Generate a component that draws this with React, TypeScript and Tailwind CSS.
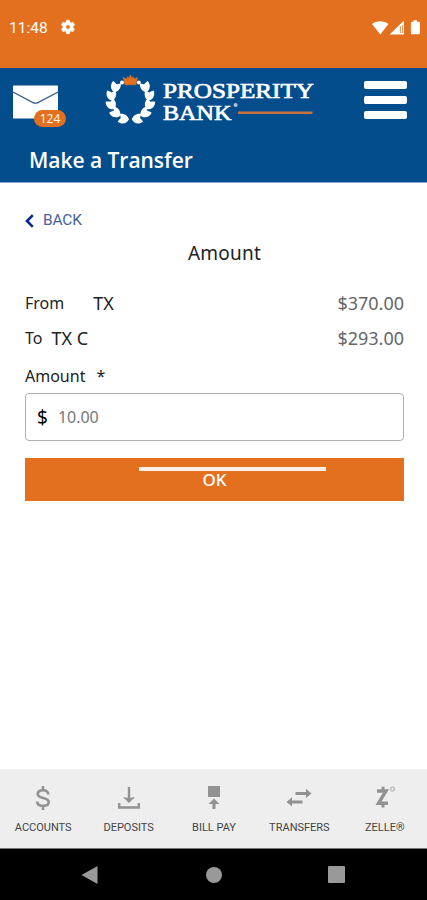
import type { ReactNode } from "react";

const LEAVES = [
  { x: 15.4, y: 17, r: 24 },
  { x: 11.4, y: 25.4, r: 4 },
  { x: 11.4, y: 34.6, r: -18 },
  { x: 15.6, y: 43, r: -42 },
  { x: 23.6, y: 49, r: -70 },
];

function Wreath() {
  return (
    <g fill="#fff">
      {LEAVES.map((l) => (
        <path
          key={l.y}
          transform={`translate(${l.x} ${l.y}) rotate(${l.r})`}
          d="M-4.600 -4.600 C-3 -4.400 -1.400 -3.800 0 -3 L3.600 -5.400 C5.400 -1.500 5.200 2 1.600 5.200 C-3.400 4.600 -6 0.500 -4.600 -4.600Z"
        />
      ))}
      <circle cx="22" cy="12.6" r="2" />
    </g>
  );
}

function Logo() {
  return (
    <svg width="214" height="60" viewBox="0 0 214 60" className="shrink-0">
      <Wreath />
      <g transform="translate(60.8 0)">
        <g transform="scale(-1 1)">
          <Wreath />
        </g>
      </g>
      <path
        d="M23.200 7.400 L26.800 9 L27.800 6.600 L29 8.600 L30.400 5 L31.800 8.600 L33 6.600 L34 9 L37.600 7.400 L35.800 14.800 H25Z"
        fill="#e3701e"
        stroke="#e3701e"
        strokeWidth="0.6"
      />
      <g
        fill="#fff"
        stroke="#fff"
        strokeWidth="0.7"
        fontFamily="'Liberation Serif', serif"
        fontSize="21.500"
      >
        <text x="63" y="28.2" textLength="151" lengthAdjust="spacingAndGlyphs">
          PROSPERITY
        </text>
        <text x="63" y="49.8" textLength="68.5" lengthAdjust="spacingAndGlyphs">
          BANK
        </text>
      </g>
      <circle cx="135.6" cy="35" r="2" fill="#a9c3e2" />
      <path d="M138 42.8H212.5" stroke="#c9733f" strokeWidth="2.600" />
    </svg>
  );
}

function StatusBar() {
  return (
    <div className="flex h-[68px] items-start bg-[#e3701e] pt-[18px] pl-[9px] font-['Roboto',sans-serif] text-white">
      <span className="text-[15.5px] leading-5">11:48</span>
      <svg width="16" height="16" viewBox="0 0 24 24" className="mt-[1px] ml-[12px] shrink-0">
        <path
          fill="#fff"
          stroke="#fff"
          strokeWidth="0.800"
          d="M19.4 13c.04-.32.1-.66.1-1s-.03-.68-.07-1l2.3-1.7a.5.5 0 0 0 .1-.64l-2-3.5a.5.5 0 0 0-.6-.22l-2.6 1a7.300 7.300 0 0 0-1.700-1L14.250 2.200A.5.5 0 0 0 13.750 1.800h-3.800a.5.5 0 0 0-.5.42L9.100 4.950a7.700 7.700 0 0 0-1.700 1l-2.600-1a.5.5 0 0 0-.6.22l-2 3.500a.5.5 0 0 0 .12.64L4.570 11a8 8 0 0 0 0 2l-2.200 1.700a.5.5 0 0 0-.12.64l2 3.460c.12.22.4.3.6.22l2.600-1c.52.400 1.100.730 1.700.980l.4 2.700c.04.240.240.420.5.420h3.800c.25 0 .46-.18.5-.42l.35-2.700a7 7 0 0 0 1.700-.98l2.600 1c.23.08.5 0 .6-.22l2-3.460a.5.5 0 0 0-.12-.64zM12 15.200a3.200 3.200 0 1 1 0-6.400 3.200 3.200 0 0 1 0 6.400z"
        />
      </svg>
      <svg width="49" height="16" viewBox="0 0 49 16" fill="#fff" className="mt-[2px] mr-[6px] ml-auto shrink-0">
        <path d="M0 4C4.300.200 12 .200 16.400 4L8.300 14.500Z" />
        <path d="M32 .500V14.500H17.600Z" />
        <path d="M28.600 6V13M30.600 5V13" stroke="#e3701e" strokeWidth="0.700" />
        <path d="M41.500.3h3.400v1.500h2.200c.5 0 .8.3.8.8V13.500c0 .5-.3.800-.8.800h-7.400c-.5 0-.8-.3-.8-.8V2.600c0-.5.3-.8.8-.8h1.800z" />
      </svg>
    </div>
  );
}

function Header() {
  return (
    <header className="h-[115px] border-b border-[#8ba4cf] bg-[#034d8d]">
      <div className="flex h-[69px] items-start">
        <div className="relative mt-[17px] ml-[13px] h-[34px] w-[45px] shrink-0">
          <svg width="45" height="34" viewBox="0 0 45 34">
            <path d="M0 1.500C0 .8.500.5 1 .5H44c.6 0 1 .4 1 1V32.500c0 .6-.4 1-1 1H1c-.6 0-1-.4-1-1Z" fill="#fff" />
            <path d="M0 7 L19.500 17.400Q22.500 19 25.500 17.400L45 7" fill="none" stroke="#3d5f92" strokeWidth="1.300" />
          </svg>
          <span className="absolute top-[25px] left-[21px] flex h-[17px] w-[32px] items-center justify-center rounded-full bg-[#e3701e] font-['Open_Sans',sans-serif] text-[12px] font-medium text-white">
            124
          </span>
        </div>
        <div className="ml-[42px] pt-[2px]">
          <Logo />
        </div>
        <div className="mt-[13px] mr-[20px] ml-auto flex flex-col gap-[7px]">
          <span className="h-[8px] w-[43px] rounded-[2px] bg-white" />
          <span className="h-[8px] w-[43px] rounded-[2px] bg-white" />
          <span className="h-[8px] w-[43px] rounded-[2px] bg-white" />
        </div>
      </div>
      <h1 className="pt-[9px] pl-[29px] font-['Open_Sans',sans-serif] text-[21px] leading-7 font-semibold tracking-[-0.03px] text-white">
        Make a Transfer
      </h1>
    </header>
  );
}

function TransferForm() {
  return (
    <main className="h-[586px] bg-white pt-[28px] pr-[23px] pl-[25px] font-['Noto_Sans',sans-serif] text-[#222]">
      <div className="flex h-5 items-center text-[#4a629c]">
        <svg width="9" height="14" viewBox="0 0 9 14">
          <path d="M7.800 1.200 2 7 7.800 12.800" fill="none" stroke="#0b2b86" strokeWidth="2.600" />
        </svg>
        <span className="ml-[9px] font-['Roboto',sans-serif] text-[15.500px] tracking-[-0.2px]">BACK</span>
      </div>
      <h2 className="mt-[8px] text-center text-[19px] leading-7 tracking-[0.2px] pl-[20px]">Amount</h2>
      <div className="mt-[22px] flex h-[28px] items-center">
        <span className="text-[16px]">From</span>
        <span className="ml-[29px] text-[18px]">TX</span>
        <span className="ml-auto text-[18px] text-[#666]">$370.00</span>
      </div>
      <div className="mt-[7px] flex h-[28px] items-center">
        <span className="text-[16px]">To</span>
        <span className="ml-[9px] text-[18px]">TX C</span>
        <span className="ml-auto text-[18px] text-[#666]">$293.00</span>
      </div>
      <div className="mt-[12px] flex h-6 items-center text-[16px]">
        <span>Amount</span>
        <span className="ml-[11px]">*</span>
      </div>
      <div className="mt-[5px] flex h-[48px] items-center rounded-[4px] border border-[#b0b0b0] pl-[11px]">
        <span className="text-[19px] text-black">$</span>
        <span className="ml-[10px] text-[16px] text-[#777]">10.00</span>
      </div>
      <button className="mt-[17px] flex h-[43px] w-[379px] flex-col items-center bg-[#e3701e] pt-[9px] text-white">
        <span className="ml-[36px] h-[4px] w-[187px] bg-[#ffefe8]" />
        <span className="text-[17px] leading-[17px] font-medium">OK</span>
      </button>
    </main>
  );
}

function TabIcon({ children }: { children: ReactNode }) {
  return (
    <svg width="28" height="28" viewBox="0 0 28 28" fill="none" stroke="#929292" strokeWidth="2.200">
      {children}
    </svg>
  );
}

const TABS = [
  {
    label: "ACCOUNTS",
    icon: (
      <path
        d="M19.300 10.500C19.300 7.500 17 6.200 14 6.200S8.700 7.500 8.700 10c0 5.400 11 2.400 11 8 0 2.600-2.400 3.900-5.700 3.900S8.200 20.500 8.200 17.500M14 2V6M14 22V26"
        strokeWidth="2.600"
      />
    ),
  },
  {
    label: "DEPOSITS",
    icon: (
      <>
        <path d="M14 3V17M4.200 19V23.500H23.800V19" strokeWidth="2.400" />
        <path d="M8 13C11 14 17 14 20 13L14 19Z" fill="#929292" stroke="none" />
      </>
    ),
  },
  {
    label: "BILL PAY",
    icon: (
      <>
        <path d="M8 2H20V13H8ZM14 14.500 19.500 20H8.500Z" fill="#929292" stroke="none" />
        <path d="M14 18V25" strokeWidth="3" />
      </>
    ),
  },
  {
    label: "TRANSFERS",
    icon: (
      <>
        <path d="M10.500 9.500H22M6 18H17.500" strokeWidth="2.800" />
        <path d="M21 4.800 26.500 9.500 21 14ZM7 13.300 1.500 18 7 22.500Z" fill="#929292" stroke="none" />
      </>
    ),
  },
  {
    label: "ZELLE®",
    icon: (
      <>
        <path d="M6 7H15L7.500 19.300H17" strokeWidth="3.400" />
        <path d="M12 2.800V7M12 19V23.500" strokeWidth="3" />
        <circle cx="21.500" cy="5" r="1.800" stroke="#c5c5c5" strokeWidth="1.800" />
      </>
    ),
  },
];

function TabBar() {
  return (
    <nav className="grid h-[80px] grid-cols-5 border-b border-[#777] bg-[#eee]">
      {TABS.map((tab) => (
        <div key={tab.label} className="flex flex-col items-center pt-[15px] pl-px">
          <TabIcon>{tab.icon}</TabIcon>
          <span className="mt-[8px] font-['Roboto',sans-serif] text-[11px] leading-4 whitespace-nowrap text-[#444]">
            {tab.label}
          </span>
        </div>
      ))}
    </nav>
  );
}

function SystemNav() {
  return (
    <div className="flex h-[51px] items-center bg-black pl-[81px]">
      <svg width="17" height="20" viewBox="0 0 17 20">
        <path d="M.5 10 16.500 1V19Z" fill="#999" />
      </svg>
      <span className="ml-[108px] h-[16px] w-[16px] rounded-full bg-[#999]" />
      <span className="ml-[106px] h-[17px] w-[17px] rounded-[1px] bg-[#999]" />
    </div>
  );
}

export default function App() {
  return (
    <div className="flex h-[900px] w-[427px] flex-col overflow-hidden bg-white">
      <StatusBar />
      <Header />
      <TransferForm />
      <TabBar />
      <SystemNav />
    </div>
  );
}
